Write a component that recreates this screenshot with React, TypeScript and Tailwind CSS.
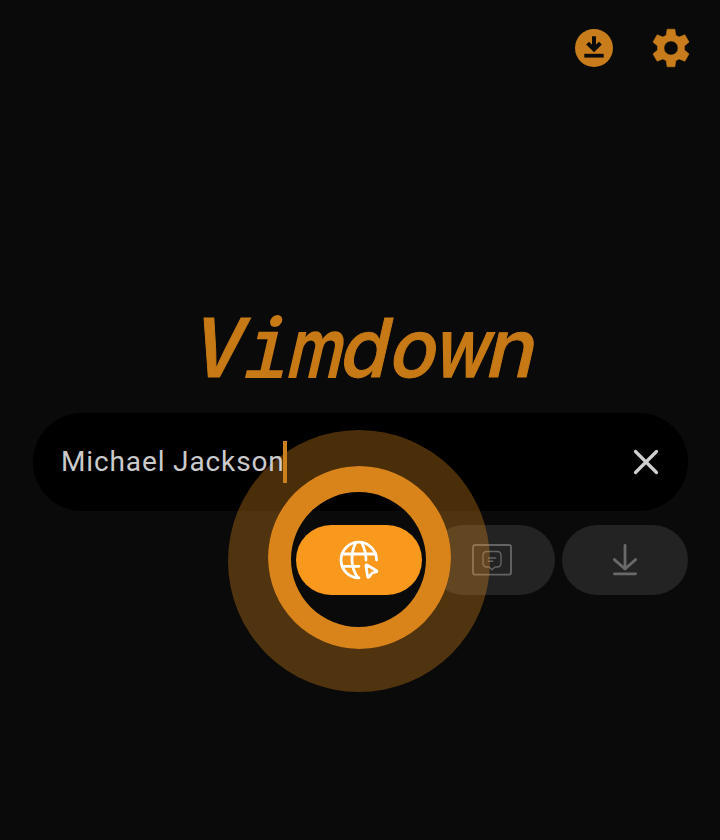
function DownloadCircleIcon() {
  return (
    <svg className="h-[38px] w-[38px]" viewBox="0 0 38 38" fill="none">
      <circle cx="19" cy="19" r="19" fill="#c87c1b" />
      <path d="M19 7.2V20M12.6 14.1L19 20.5L25.4 14.1" stroke="#0b0b0b" strokeWidth="4" />
      <path d="M9.3 26.7H28.7" stroke="#0b0b0b" strokeWidth="3.8" />
    </svg>
  );
}

function GearIcon() {
  return (
    <svg className="h-[46px] w-[46px]" viewBox="0 0 24 24" fill="#c87c1b">
      <path d="M10 2.2H14L14.5 5.3L16.2 6.3L19.2 5.1L21.4 8.9L19 11V13L21.4 15.1L19.2 18.9L16.2 17.7L14.5 18.7L14 21.8H10L9.5 18.7L7.8 17.7L4.8 18.9L2.6 15.1L5 13V11L2.6 8.9L4.8 5.1L7.8 6.3L9.5 5.3ZM12 15.7a3.7 3.7 0 1 0 0-7.4a3.7 3.7 0 0 0 0 7.4z" fillRule="evenodd" stroke="#c87c1b" strokeWidth=".3" strokeLinejoin="round" />
    </svg>
  );
}

function GlobeCursorIcon() {
  return (
    <svg className="h-10 w-10" viewBox="0 0 40 40" fill="none" stroke="#fff" strokeWidth="2.8" strokeLinecap="round" strokeLinejoin="round">
      <path d="M37.6 20A17.8 17.8 0 1 0 20 37.8" />
      <path d="M3.2 14H36.8M3.2 26.3H20" />
      <path d="M17 2.4C11.3 13 11.3 27 18.8 37.6M22.5 2.4Q27 11 27 20" />
      <path d="M28 25L37.6 30.8Q38.4 31.6 37 32L33 33L30.2 36.8Q29 38 28.6 36.5L27 26Q26.9 24.5 28 25Z" />
    </svg>
  );
}

function SubtitleIcon() {
  return (
    <svg className="h-8 w-10" viewBox="0 0 40 32" fill="none" stroke="#646464" strokeLinecap="round" strokeLinejoin="round">
      <rect x="1" y="1" width="38" height="29.6" rx="2" strokeWidth="1.9" />
      <path d="M15 7.5H25Q29 7.5 29 11.5V19Q29 23 25 23H23L20 25.8L17 23H15Q11 23 11 19V11.5Q11 7.5 15 7.5Z" strokeWidth="1.4" />
      <path d="M16.5 14H23.7M16.5 17.3H20.8" strokeWidth="1.4" />
    </svg>
  );
}

function DownloadIcon() {
  return (
    <svg className="h-8 w-6" viewBox="0 0 24 32" fill="none" stroke="#696969" strokeWidth="2.8" strokeLinecap="round" strokeLinejoin="round">
      <path d="M12 1.5V24M1.4 15.6L12 25L22.6 15.6M1.4 29.8H22.6" />
    </svg>
  );
}

function Wordmark() {
  const cell = "inline-flex w-[49px] justify-center";
  return (
    <h1 className="mt-[204px] ml-[189px] h-[113px] origin-[0px_78px] -skew-x-[13deg] font-['Inter',sans-serif] text-[81px] leading-[97px] font-medium whitespace-nowrap text-[#c67915] [-webkit-text-stroke:1px_#c67915]">
      <span className={cell}>
        <span className="scale-x-[.85] font-semibold">V</span>
      </span>
      <span className={cell + " relative font-['DejaVu_Sans_Mono',monospace] font-normal"}>
        <span className="scale-x-[.95] [clip-path:inset(25px_0_0_0)] [-webkit-text-stroke:2px_#c67915]">i</span>
        <span className="absolute top-[13.5px] left-[18.5px] h-3 w-3 rounded-full bg-[#c67915]" />
      </span>
      <span className={cell}>
        <span className="scale-x-[.77] [-webkit-text-stroke:1.8px_#c67915]">m</span>
      </span>
      <span className={cell}>
        <span className="origin-right scale-x-[.97]">d</span>
      </span>
      <span className={cell}>
        <span className="scale-x-[.96]">o</span>
      </span>
      <span className={cell}>
        <span className="scale-x-[.82] [-webkit-text-stroke:1.5px_#c67915]">w</span>
      </span>
      <span className={cell}>
        <span>n</span>
      </span>
    </h1>
  );
}

export default function App() {
  return (
    <div className="relative flex h-[840px] w-[720px] flex-col overflow-hidden bg-[#0a0a0a] font-['Roboto',sans-serif]">
      <header className="flex h-[96px] items-center justify-end gap-[35px] pr-[26px]">
        <DownloadCircleIcon />
        <GearIcon />
      </header>

      <Wordmark />

      <div className="ml-[33px] flex h-[98px] w-[655px] items-center justify-between rounded-full bg-black pr-[29px] pl-[28px]">
        <div className="relative z-20 flex items-center">
          <span className="text-[28px] tracking-[0.87px] text-[#cbcbcb]">Michael Jackson</span>
          <span className="-ml-[2px] h-[42px] w-[4px] bg-[#cc811f]" />
        </div>
        <svg className="h-[26px] w-[26px]" viewBox="0 0 26 26" stroke="#d0d0d0" strokeWidth="3.2" strokeLinecap="round">
          <path d="M2.5 2.5L23.5 23.5M23.5 2.5L2.5 23.5" />
        </svg>
      </div>

      <div className="mt-[14px] mr-8 ml-auto flex gap-[7px]">
        <button className="relative z-20 flex h-[70px] w-[126px] items-center justify-center rounded-full bg-[#f8981d]">
          <GlobeCursorIcon />
        </button>
        <button className="flex h-[70px] w-[126px] items-center justify-center rounded-full bg-[#232323]">
          <SubtitleIcon />
        </button>
        <button className="flex h-[70px] w-[126px] items-center justify-center rounded-full bg-[#232323]">
          <DownloadIcon />
        </button>
      </div>

      <svg className="absolute top-0 left-0 z-10" width="720" height="840" fillRule="evenodd">
        <path d="M228 561a131 131 0 1 0 262 0a131 131 0 1 0-262 0ZM268 557.5a91.5 91.5 0 1 0 183 0a91.5 91.5 0 1 0-183 0Z" fill="#f5961f" fillOpacity=".3" />
        <path d="M268 557.5a91.5 91.5 0 1 0 183 0a91.5 91.5 0 1 0-183 0ZM291 559.5a67.5 67.5 0 1 0 135 0a67.5 67.5 0 1 0-135 0Z" fill="#d8841b" />
      </svg>
    </div>
  );
}
